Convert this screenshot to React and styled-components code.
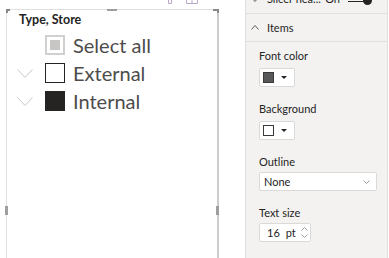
import React from 'react'
import styled, { createGlobalStyle, css } from 'styled-components'

const GlobalStyle = createGlobalStyle`
  html, body {
    margin: 0;
    padding: 0;
    background: #ffffff;
  }
  body {
    width: 389px;
    height: 258px;
    overflow: hidden;
    font-family: Lato, "Open Sans", sans-serif;
  }
`

const Page = styled.div`
  display: flex;
  width: 389px;
  height: 258px;
  overflow: hidden;
`

/* report canvas with the slicer visual */
const Canvas = styled.div`
  width: 245px;
  flex-shrink: 0;
  padding: 9px 0 0 6px;
  box-sizing: border-box;
`

const Visual = styled.div`
  position: relative;
  width: 213px;
  height: 280px;
  box-sizing: border-box;
  border-top: 1px solid #e1dfdd;
  border-left: 1px solid #e1dfdd;
  border-right: 2px solid #cfcdcb;
`

const HeaderIcons = styled.svg`
  position: absolute;
  top: -21px;
  left: 143px;
`

const Handle = styled.span`
  position: absolute;
  box-sizing: border-box;
  background: ${p => (p.$corner ? 'transparent' : '#a19f9d')};
  ${p => p.$corner === 'tl' && css`
    left: -1px; top: -1px; width: 4px; height: 4px;
    border-top: 2px solid #8a8886;
    border-left: 2px solid #8a8886;
  `}
  ${p => p.$corner === 'tr' && css`
    right: -2px; top: -1px; width: 6px; height: 4px;
    border-top: 2px solid #8a8886;
    border-right: 2px solid #8a8886;
  `}
`

const Title = styled.div`
  padding: 2px 0 0 12px;
  height: 19px;
  line-height: 16px;
  font-size: 12.5px;
  font-weight: 700;
  color: #252423;
`

const List = styled.div`
  display: flex;
  flex-direction: column;
`

const Row = styled.div`
  display: flex;
  align-items: center;
  height: 28px;
  padding-left: 10px;
`

const Expander = styled.span`
  display: flex;
  width: 16px;
  height: 9px;
  margin-right: 12px;
`

const Box = styled.span`
  width: 20px;
  height: 20px;
  box-sizing: border-box;
  display: flex;
  align-items: center;
  justify-content: center;
  margin-right: 8px;
  ${p => p.$state === 'partial' && css`
    border: 2px solid #d2d0ce;
    background: #fff;
    &::after {
      content: '';
      width: 10px;
      height: 10px;
      background: #c8c6c4;
    }
  `}
  ${p => p.$state === 'off' && css`
    border: 1.5px solid #252423;
    background: #fff;
  `}
  ${p => p.$state === 'on' && css`
    border: 1.5px solid #252423;
    background: #252423;
  `}
`

const ItemText = styled.span`
  font-size: 20px;
  color: #4d4c4b;
  line-height: 24px;
`

/* format pane */
const Pane = styled.div`
  width: 143px;
  flex-shrink: 0;
  background: #f3f2f1;
  border-left: 1px solid #e1dfdd;
  border-right: 1px solid #e1dfdd;
  box-sizing: border-box;
  font-size: 11px;
  color: #252423;
`

const SectionHead = styled.div`
  display: flex;
  align-items: center;
  height: ${p => p.$height}px;
  margin-top: ${p => p.$offset || 0}px;
  padding: 0 17px 0 5px;
  border-bottom: 1px solid #e1dfdd;
  line-height: 14px;
  white-space: nowrap;
`

const Chevron = styled.span`
  display: flex;
  margin-right: 8px;
  flex-shrink: 0;
`

const State = styled.span`
  margin-left: auto;
  margin-right: 8px;
`

const Toggle = styled.span`
  position: relative;
  flex-shrink: 0;
  width: 22px;
  height: 6px;
  border: 1px solid #252423;
  border-left: none;
  border-radius: 0 3px 3px 0;
  box-sizing: border-box;
  &::after {
    content: '';
    position: absolute;
    right: -3px;
    top: -1px;
    width: 9px;
    height: 9px;
    border-radius: 50%;
    background: #252423;
  }
`

const Body = styled.div`
  padding: 7px 0 0 13px;
`

const Field = styled.div`
  margin-bottom: 15px;
`

const Label = styled.div`
  line-height: 14px;
  color: #252423;
`

const Control = styled.div`
  display: flex;
  align-items: center;
  box-sizing: border-box;
  height: 19px;
  width: ${p => p.$width}px;
  margin-top: ${p => p.$gap}px;
  background: #fff;
  border: 1px solid #dcdad8;
  border-radius: 2px;
  font-size: 11px;
  color: #252423;
`

const Swatch = styled.span`
  width: 11px;
  height: 11px;
  box-sizing: border-box;
  margin: 0 7px 0 3px;
  border: 1px solid #3b3a39;
  background: ${p => p.$color};
`

const Caret = styled.span`
  width: 0;
  height: 0;
  border-left: 3px solid transparent;
  border-right: 3px solid transparent;
  border-top: 3px solid #252423;
`

const Value = styled.span`
  padding-left: ${p => p.$pad}px;
  line-height: 14px;
`

const Unit = styled.span`
  margin-left: 6px;
  line-height: 14px;
`

const Trailing = styled.span`
  margin-left: auto;
  margin-right: ${p => p.$right}px;
  display: flex;
  flex-direction: column;
  gap: ${p => p.$gap || 0}px;
`

const Down = ({ w = 16, h = 9, color = '#c8c6c4' }) => (
  <svg width={w} height={h} viewBox={`0 0 ${w} ${h}`}>
    <path d={`M0.5 0.5 L${w / 2} ${h - 0.5} L${w - 0.5} 0.5`} fill="none" stroke={color} strokeWidth="1" />
  </svg>
)

const Up = ({ w = 8, h = 5, color = '#a19f9d' }) => (
  <svg width={w} height={h} viewBox={`0 0 ${w} ${h}`}>
    <path d={`M0.5 ${h - 0.5} L${w / 2} 0.5 L${w - 0.5} ${h - 0.5}`} fill="none" stroke={color} strokeWidth="1" />
  </svg>
)

const items = [
  { label: 'Select all', state: 'partial', expand: false },
  { label: 'External', state: 'off', expand: true },
  { label: 'Internal', state: 'on', expand: true },
]

export default function App() {
  return (
    <>
      <GlobalStyle />
      <Page>
        <Canvas>
          <Visual>
            <HeaderIcons width="50" height="15" viewBox="0 0 50 15">
              <path d="M18.5 8 V14.5 H21.5 V8" fill="none" stroke="#b9a6c9" strokeWidth="1" />
              <path d="M36.5 6 V14.5 H47.5 V6 M36.5 10.5 H47.5 M42 10.5 V14.5" fill="none" stroke="#b9a6c9" strokeWidth="1" />
            </HeaderIcons>
            <Handle $corner="tl" />
            <Handle $corner="tr" />
            <Handle style={{ left: 100, top: -1, width: 10, height: 2 }} />
            <Handle style={{ left: -2, top: 196, width: 3, height: 9 }} />
            <Handle style={{ right: -2, top: 196, width: 3, height: 9 }} />
            <Title>Type, Store</Title>
            <List>
              {items.map(it => (
                <Row key={it.label}>
                  <Expander>{it.expand && <Down />}</Expander>
                  <Box $state={it.state} />
                  <ItemText>{it.label}</ItemText>
                </Row>
              ))}
            </List>
          </Visual>
        </Canvas>

        <Pane>
          <SectionHead $height={28} $offset={-15}>
            <Chevron>
              <Down w={8} h={5} color="#605e5c" />
            </Chevron>
            <span>Slicer hea...</span>
            <State>On</State>
            <Toggle />
          </SectionHead>
          <SectionHead $height={27}>
            <Chevron>
              <Up w={8} h={5} color="#605e5c" />
            </Chevron>
            <span>Items</span>
          </SectionHead>
          <Body>
            <Field>
              <Label>Font color</Label>
              <Control $width={36} $gap={5}>
                <Swatch $color="#595959" />
                <Caret />
              </Control>
            </Field>
            <Field>
              <Label>Background</Label>
              <Control $width={36} $gap={5}>
                <Swatch $color="#ffffff" />
                <Caret />
              </Control>
            </Field>
            <Field>
              <Label>Outline</Label>
              <Control $width={118} $gap={3}>
                <Value $pad={4}>None</Value>
                <Trailing $right={6}>
                  <Down w={7} h={4} color="#a19f9d" />
                </Trailing>
              </Control>
            </Field>
            <Field>
              <Label>Text size</Label>
              <Control $width={52} $gap={3}>
                <Value $pad={7}>16</Value>
                <Unit>pt</Unit>
                <Trailing $right={2} $gap={3}>
                  <Up w={7} h={4} />
                  <Down w={7} h={4} color="#a19f9d" />
                </Trailing>
              </Control>
            </Field>
          </Body>
        </Pane>
      </Page>
    </>
  )
}
